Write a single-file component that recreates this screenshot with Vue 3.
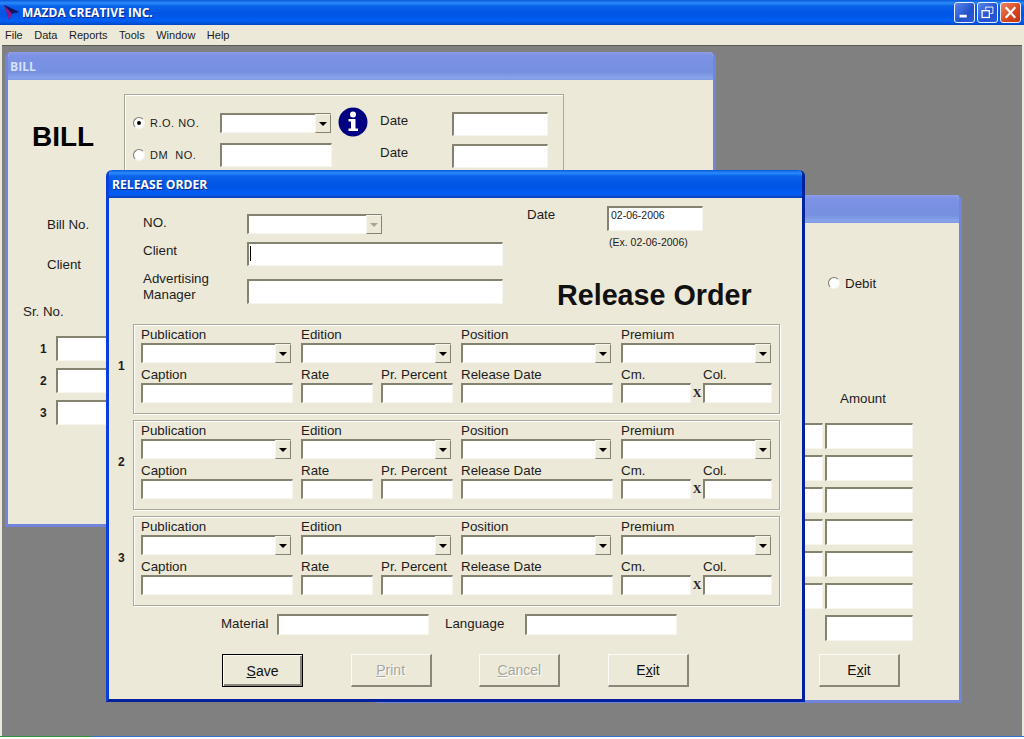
<template>
  <div class="app">
    <!-- main title bar -->
    <div class="app-title">
      <svg class="logo" width="17" height="17" viewBox="0 0 17 17">
        <path d="M1 1 L16 8 L9 9.5 L6 16 Z" fill="#1c2fb0" />
        <path d="M1 1 L9 9.5 L6 16 Z" fill="#8a1a8a" />
        <path d="M1 1 L16 8 L9 9.5 Z" fill="#14145c" />
      </svg>
      <span class="app-name">MAZDA CREATIVE INC.</span>
      <div class="win-btns">
        <div class="win-btn">
          <svg width="21" height="21" viewBox="0 0 21 21"><rect x="5" y="13" width="8" height="3" fill="#fff" /></svg>
        </div>
        <div class="win-btn">
          <svg width="21" height="21" viewBox="0 0 21 21" fill="none" stroke="#fff">
            <path d="M8.5 7.5 V4.5 H16.5 V11.5 H13.5" />
            <rect x="4.5" y="8.5" width="8" height="7.5" stroke-width="1.4" />
          </svg>
        </div>
        <div class="win-btn close">
          <svg width="21" height="21" viewBox="0 0 21 21" stroke="#fff" stroke-width="2.4" stroke-linecap="square">
            <path d="M6 5.5 L15 15.5 M15 5.5 L6 15.5" />
          </svg>
        </div>
      </div>
    </div>

    <div class="menu">
      <span v-for="m in menus" :key="m">{{ m }}</span>
    </div>

    <div class="desktop">
      <!-- BILL window, inactive -->
      <section class="window inactive bill">
        <div class="win-title">BILL</div>
        <div class="bill-body">
          <div class="bill-top">
            <h1 class="bill-head">BILL</h1>
            <div class="bill-box">
              <div class="bill-row">
                <span class="radio checked"></span>
                <span class="small-label">R.O. NO.</span>
                <div class="combo bill-combo"><i class="arrow-btn"><b></b></i></div>
                <svg class="info" width="30" height="30" viewBox="0 0 30 30">
                  <circle cx="15" cy="15" r="14.5" fill="#000080" />
                  <circle cx="15" cy="7.5" r="3" fill="#fff" />
                  <path d="M10.5 12 H17.5 V21.5 H20 V24 H10.5 V21.5 H13 V14.5 H10.5 Z" fill="#fff" />
                </svg>
                <span class="date-label">Date</span>
                <div class="input date-input"></div>
              </div>
              <div class="bill-row second">
                <span class="radio"></span>
                <span class="small-label">DM&nbsp; NO.</span>
                <div class="input bill-dm"></div>
                <span class="date-label gap-info">Date</span>
                <div class="input date-input"></div>
              </div>
            </div>
          </div>
          <div class="bill-label first">Bill No.</div>
          <div class="bill-label client">Client</div>
          <div class="sr-label">Sr. No.</div>
          <div v-for="n in 3" :key="n" class="sr-row">
            <b class="num">{{ n }}</b>
            <div class="input sr-input"></div>
          </div>
        </div>
      </section>

      <!-- window behind on the right, inactive -->
      <section class="window inactive statement">
        <div class="win-title"></div>
        <div class="statement-body">
          <div class="debit"><span class="radio"></span>Debit</div>
          <div class="amount">Amount</div>
          <div class="amount-rows">
            <div v-for="n in 7" :key="n" class="amount-row">
              <div class="input qty-input" :class="{ hidden: n === 7 }"></div>
              <div class="input amount-input"></div>
            </div>
          </div>
          <button class="btn exit-back">E<u>x</u>it</button>
        </div>
      </section>

      <!-- RELEASE ORDER window, active -->
      <section class="window active release">
        <div class="win-title">RELEASE ORDER</div>
        <div class="release-body">
          <div class="top">
            <div class="top-left">
              <label class="top-label">NO.</label>
              <div class="combo no-combo"><i class="arrow-btn off"><b></b></i></div>
              <label class="top-label">Client</label>
              <div class="input client-input"><span class="caret"></span></div>
              <label class="top-label manager-label">Advertising<br />Manager</label>
              <div class="input manager-input"></div>
            </div>
            <div class="top-right">
              <div class="date-row">
                <label class="date-cap">Date</label>
                <div class="input top-date">02-06-2006</div>
              </div>
              <div class="example">(Ex. 02-06-2006)</div>
              <h1 class="release-head">Release Order</h1>
            </div>
          </div>

          <div v-for="n in 3" :key="n" class="entry">
            <b class="num entry-num">{{ n }}</b>
            <div class="group">
              <div class="group-row">
                <div v-for="c in combos" :key="c" class="field">
                  <label>{{ c }}</label>
                  <div class="combo"><i class="arrow-btn"><b></b></i></div>
                </div>
              </div>
              <div class="group-row inputs">
                <div class="field w152"><label>Caption</label><div class="input"></div></div>
                <div class="field w72"><label>Rate</label><div class="input"></div></div>
                <div class="field w72"><label>Pr. Percent</label><div class="input"></div></div>
                <div class="field w152"><label>Release Date</label><div class="input"></div></div>
                <div class="field w70"><label>Cm.</label><div class="input"></div></div>
                <span class="times">X</span>
                <div class="field w69"><label>Col.</label><div class="input"></div></div>
              </div>
            </div>
          </div>

          <div class="material">
            <label class="material-label">Material</label>
            <div class="input material-input"></div>
            <label class="language-label">Language</label>
            <div class="input material-input"></div>
          </div>

          <div class="buttons">
            <button class="btn default"><u>S</u>ave</button>
            <button class="btn disabled"><u>P</u>rint</button>
            <button class="btn disabled"><u>C</u>ancel</button>
            <button class="btn">E<u>x</u>it</button>
          </div>
        </div>
      </section>
    </div>
    <div class="task-edge"></div>
  </div>
</template>

<script setup>
const menus = ['File', 'Data', 'Reports', 'Tools', 'Window', 'Help']
const combos = ['Publication', 'Edition', 'Position', 'Premium']
</script>

<style>
html, body {
  margin: 0;
  overflow: hidden;
}
</style>

<style scoped>
.app {
  width: 1024px;
  height: 739px;
  display: flex;
  flex-direction: column;
  overflow: hidden;
  background: #ece9d8;
  font-family: "Liberation Sans", Arial, sans-serif;
  font-size: 13.33px;
  color: #1c1c1c;
}

/* main title bar */
.app-title {
  height: 25px;
  flex: none;
  display: flex;
  align-items: center;
  padding-left: 3px;
  background: linear-gradient(180deg, #0a58dc 0, #2a8cf8 3px, #0a62ea 6px, #0054e4 14px, #0060f4 21px, #0046c4 25px);
}
.logo {
  margin-right: 2px;
}
.app-name {
  color: #fff;
  font-family: "Open Sans", sans-serif;
  font-weight: 700;
  font-size: 12px;
  text-shadow: 1px 1px 0 #0a2a90;
}
.win-btns {
  margin-left: auto;
  margin-right: 3px;
  display: flex;
  gap: 2px;
}
.win-btn {
  width: 19px;
  height: 19px;
  border: 1px solid #e8eefc;
  border-radius: 3px;
  background: linear-gradient(135deg, #5a86ea, #2350cc 60%, #2c5cd8);
  display: flex;
  align-items: center;
  justify-content: center;
}
.win-btn.close {
  background: linear-gradient(135deg, #ea8a66, #d8431c 60%, #c03410);
}

/* menu */
.menu {
  height: 20px;
  flex: none;
  display: flex;
  align-items: center;
  gap: 11.5px;
  padding-left: 5px;
  font-size: 11px;
}

/* mdi desktop */
.desktop {
  position: relative;
  flex: 1;
  margin: 0 2px;
  background: #808080;
  border-top: 1px solid #5a5a55;
}
.task-edge {
  height: 3px;
  flex: none;
  box-sizing: border-box;
  background: #fff;
  border-top: 1px solid;
  border-image: linear-gradient(90deg, #3c8a3c 0 92px, #3a6cc8 92px) 1;
}

/* windows */
.window {
  position: absolute;
  box-sizing: border-box;
  background: #ece9d8;
  border-radius: 6px 6px 0 0;
  overflow: hidden;
  border-style: solid;
  border-width: 0 3px 3px;
}
.win-title {
  height: 28px;
  margin: 0 -3px;
  padding-left: 5px;
  box-sizing: border-box;
  line-height: 30px;
  font-family: "Open Sans", sans-serif;
  font-weight: 700;
  font-size: 12.2px;
}
.inactive {
  border-color: #7384dc;
}
.inactive .win-title {
  color: #d6e0f8;
  background: linear-gradient(180deg, #8c9ce8 0, #7c92e4 4px, #7690e0 20px, #88a4ea 26px, #7f98e4 28px);
}
.active {
  border-color: #0a3fdc #00229c #00229c #0a3fdc;
}
.active .win-title {
  padding-left: 6px;
  color: #fff;
  text-shadow: 1px 1px 0 #0a2a90;
  background: linear-gradient(180deg, #0a58dc 0, #2a8cf8 3px, #0a62ea 6px, #0054e4 16px, #0060f4 24px, #0040b8 28px);
}
.bill {
  left: 3px;
  top: 6px;
  width: 711px;
  height: 475px;
}
.statement {
  left: 373px;
  top: 149px;
  width: 587px;
  height: 508px;
}
.release {
  left: 104px;
  top: 124px;
  width: 699px;
  height: 532px;
}

/* shared controls */
.input,
.combo {
  position: relative;
  box-sizing: border-box;
  background: #fff;
  border-style: solid;
  border-width: 2px 1px 1px 2px;
  border-color: #85826f #f6f5ee #f6f5ee #85826f;
}
.combo {
  height: 20px;
  width: 150px;
}
.arrow-btn {
  position: absolute;
  right: -1px;
  top: -1px;
  bottom: -1px;
  width: 16px;
  box-sizing: border-box;
  background: #ece9d8;
  border-style: solid;
  border-width: 1px;
  border-color: #f6f5ee #85826f #85826f #f6f5ee;
  display: flex;
  align-items: center;
  justify-content: center;
}
.arrow-btn b {
  width: 0;
  height: 0;
  border-left: 4px solid transparent;
  border-right: 4px solid transparent;
  border-top: 4px solid #000;
}
.arrow-btn.off b {
  border-top-color: #a5a497;
}
.radio {
  position: relative;
  display: inline-block;
  flex: none;
  width: 12px;
  height: 12px;
  box-sizing: border-box;
  border-radius: 50%;
  background: #fff;
  border: 1.5px solid;
  border-color: #7a7868 #f6f5ee #f6f5ee #7a7868;
}
.radio.checked::after {
  content: "";
  position: absolute;
  left: 2.5px;
  top: 2.5px;
  width: 4px;
  height: 4px;
  border-radius: 50%;
  background: #000;
}
.btn {
  display: block;
  width: 81px;
  height: 33px;
  padding: 0;
  box-sizing: border-box;
  font: inherit;
  font-size: 14px;
  color: #111;
  background: #ece9d8;
  border-style: solid;
  border-width: 1px 2px 2px 1px;
  border-color: #fbfaf4 #8a877a #8a877a #fbfaf4;
}
.btn.default {
  border-width: 1px;
  border-color: #000;
  box-shadow: inset 1px 1px 0 #fbfaf4, inset -2px -2px 0 #8a877a;
}
.btn.disabled {
  color: #a7a69b;
  text-shadow: 1px 1px 0 #fff;
}
.num {
  font-size: 12px;
  font-weight: 700;
}

/* bill window */
.bill-body {
  display: flex;
  flex-direction: column;
  align-items: flex-start;
}
.bill-top {
  display: flex;
  align-items: flex-start;
  margin-top: 14px;
}
.bill-head {
  margin: 25px 0 0 24px;
  width: 92px;
  font-size: 28px;
  line-height: 36px;
  font-weight: 700;
  color: #000;
}
.bill-box {
  box-sizing: border-box;
  width: 440px;
  height: 100px;
  padding: 16px 0 0 8px;
  border: 1px solid #aca899;
  box-shadow: inset 1px 1px 0 #fff;
}
.bill-row {
  display: flex;
  align-items: center;
  height: 24px;
}
.bill-row.second {
  margin-top: 8px;
}
.small-label {
  width: 70px;
  margin-left: 5px;
  font-size: 11px;
  letter-spacing: 0.5px;
}
.bill-combo {
  width: 111px;
  height: 20px;
}
.bill-dm {
  width: 112px;
  height: 24px;
}
.info {
  margin: 0 12px 2px 7px;
}
.date-label {
  width: 72px;
  margin-top: -6px;
}
.date-label.gap-info {
  margin-left: 48px;
}
.date-input {
  width: 96px;
  height: 24px;
  margin-top: 1px;
}
.bill-label {
  margin-left: 39px;
}
.bill-label.first {
  margin-top: 23px;
}
.bill-label.client {
  margin-top: 25px;
}
.sr-label {
  margin: 32px 0 17px 15px;
}
.sr-row {
  display: flex;
  align-items: center;
  height: 25px;
  margin-bottom: 7px;
}
.sr-row .num {
  width: 16px;
  margin-left: 32px;
}
.sr-input {
  width: 100px;
  height: 25px;
}

/* statement window */
.statement-body {
  display: flex;
  flex-direction: column;
  align-items: flex-start;
  padding-left: 427px;
}
.debit {
  display: flex;
  align-items: center;
  gap: 5px;
  margin: 52px 0 0 23px;
  height: 16px;
}
.amount {
  margin: 100px 0 0 35px;
  height: 16px;
}
.amount-rows {
  margin-top: 16px;
  display: flex;
  flex-direction: column;
  gap: 6px;
}
.amount-row {
  display: flex;
  height: 26px;
  margin-left: -31px;
  gap: 2px;
}
.qty-input {
  width: 49px;
}
.qty-input.hidden {
  visibility: hidden;
}
.amount-input {
  width: 88px;
}
.exit-back {
  margin: 13px 0 0 14px;
}

/* release order window */
.top {
  height: 126px;
  display: flex;
}
.top-left {
  margin-left: 34px;
  padding-top: 16px;
  display: grid;
  grid-template-columns: 104px 256px;
  grid-template-rows: 20px 24px 25px;
  row-gap: 8px;
  align-content: start;
  align-items: start;
}
.top-left .top-label {
  line-height: 16px;
  margin-top: 1px;
}
.top-left .top-label.manager-label {
  margin-top: -3px;
}
.top-left > :nth-child(6) {
  margin-top: 5px;
}
.no-combo {
  width: 135px;
  height: 20px;
}
.client-input {
  height: 24px;
}
.manager-input {
  height: 25px;
}
.caret {
  position: absolute;
  left: 1px;
  top: 2px;
  width: 1px;
  height: 15px;
  background: #000;
}
.top-right {
  margin-left: 24px;
  padding-top: 8px;
}
.date-row {
  display: flex;
}
.date-cap {
  width: 80px;
  margin-top: 1px;
}
.top-date {
  width: 96px;
  height: 25px;
  line-height: 15px;
  padding-left: 2px;
  font-size: 10.5px;
}
.example {
  margin: 3px 0 0 82px;
  font-size: 10.5px;
  line-height: 16px;
}
.release-head {
  margin: 28px 0 0 30px;
  font-size: 28.7px;
  line-height: 34px;
  font-weight: 700;
  color: #111;
  white-space: nowrap;
}
.entry {
  display: flex;
  margin-bottom: 6px;
}
.entry-num {
  width: 6px;
  margin: 0 9px;
  line-height: 84px;
}
.group {
  box-sizing: border-box;
  width: 647px;
  height: 90px;
  padding: 2px 0 0 7px;
  border: 1px solid #aca899;
  box-shadow: inset 1px 1px 0 #fff, 1px 1px 0 #fff;
}
.group-row {
  display: flex;
  gap: 10px;
}
.group-row.inputs {
  gap: 8px;
  margin-top: 4px;
}
.field {
  display: flex;
  flex-direction: column;
}
.field label {
  height: 15px;
  line-height: 15px;
  margin-bottom: 1px;
  white-space: nowrap;
}
.field .input {
  height: 20px;
}
.w152 { width: 152px; }
.w72 { width: 72px; }
.w70 { width: 70px; }
.w69 { width: 69px; }
.times {
  width: 12px;
  margin: 19px -8px 0;
  text-align: center;
  font-family: "Liberation Serif", serif;
  font-weight: 700;
  font-size: 12px;
  line-height: 14px;
}
.material {
  display: flex;
  align-items: center;
  margin: 8px 0 0 112px;
  height: 21px;
}
.material-label {
  width: 56px;
  margin-top: -3px;
}
.material-input {
  width: 152px;
  height: 21px;
}
.language-label {
  width: 80px;
  margin-left: 16px;
  margin-top: -3px;
}
.buttons {
  display: flex;
  gap: 47.67px;
  margin: 19px 0 0 113px;
}
</style>
